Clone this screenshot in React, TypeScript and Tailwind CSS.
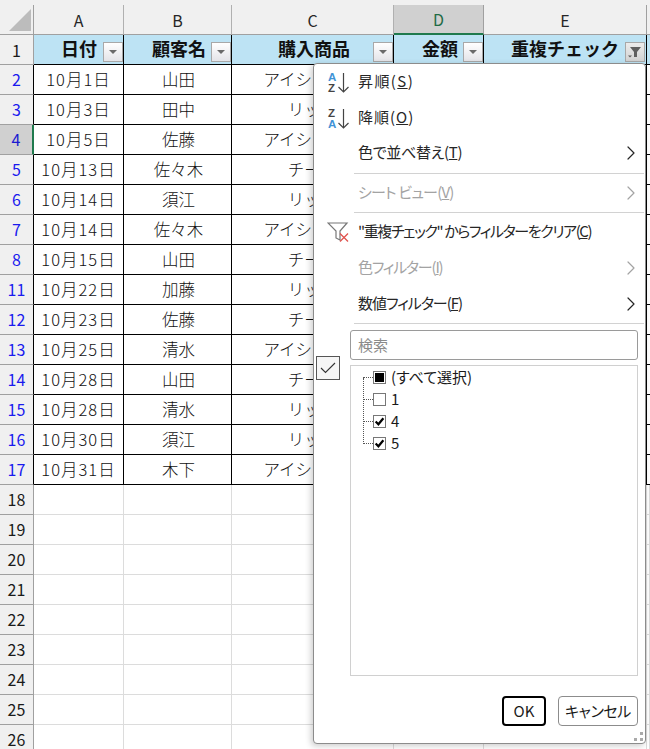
import { ChevronRight } from 'lucide-react';

const font = "font-['Noto_Sans_CJK_JP',sans-serif]";

interface Sale {
  row: number;
  date: string;
  customer: string;
  product: string;
}

const sales: Sale[] = [
  { row: 2, date: '10月1日', customer: '山田', product: 'アイシャドウ' },
  { row: 3, date: '10月3日', customer: '田中', product: 'リップ' },
  { row: 4, date: '10月5日', customer: '佐藤', product: 'アイシャドウ' },
  { row: 5, date: '10月13日', customer: '佐々木', product: 'チーク' },
  { row: 6, date: '10月14日', customer: '須江', product: 'リップ' },
  { row: 7, date: '10月14日', customer: '佐々木', product: 'アイシャドウ' },
  { row: 8, date: '10月15日', customer: '山田', product: 'チーク' },
  { row: 11, date: '10月22日', customer: '加藤', product: 'リップ' },
  { row: 12, date: '10月23日', customer: '佐藤', product: 'チーク' },
  { row: 13, date: '10月25日', customer: '清水', product: 'アイシャドウ' },
  { row: 14, date: '10月28日', customer: '山田', product: 'チーク' },
  { row: 15, date: '10月28日', customer: '清水', product: 'リップ' },
  { row: 16, date: '10月30日', customer: '須江', product: 'リップ' },
  { row: 17, date: '10月31日', customer: '木下', product: 'アイシャドウ' },
];

const emptyRows = [18, 19, 20, 21, 22, 23, 24, 25, 26];

const rowClass = 'grid grid-cols-[34px_90px_108px_162px_90px_163px_3px] h-[30px]';
const cell = 'flex items-center justify-center border-r border-b border-black pb-[1px] text-[16.5px] font-light text-[#111]';

const FilterButton = ({ active }: { active?: boolean }) => (
  <span className={`mb-[2px] flex h-[20px] w-[20px] shrink-0 items-center justify-center self-end border border-[#a8a8a8] bg-gradient-to-b ${active ? 'mr-[1px] from-[#ececec] to-[#d2d2d2]' : 'from-white to-[#e4e4e8]'}`}>
    {active ? (
      <svg width="16" height="14" viewBox="0 0 16 14">
        <path d="M3 2h11l-4 5v5H7V7z" fill="#5f5f5f" />
        <path d="M1 10.500h4l-2 2z" fill="#5f5f5f" />
      </svg>
    ) : (
      <svg width="10" height="6" viewBox="0 0 10 6">
        <path d="M1 1h8L5 5z" fill="#6a6a6a" />
      </svg>
    )}
  </span>
);

const HeaderCell = ({ label, pad }: { label: string; pad: string }) => (
  <div className="flex items-center justify-end border-r border-b border-black">
    <span className={`-mt-[3px] text-[18px] font-bold leading-none text-[#111] ${pad}`}>{label}</span>
    <FilterButton active={label === '重複チェック'} />
  </div>
);

const SortIcon = ({ top, bottom }: { top: string; bottom: string }) => (
  <svg width="24" height="24" viewBox="0 0 24 24" className="shrink-0">
    <text x="1" y="11" fontSize="11.5" fontWeight="700" fontFamily="Liberation Sans" fill={top === 'A' ? '#3f93d6' : '#444'}>{top}</text>
    <text x="1" y="22" fontSize="11.5" fontWeight="700" fontFamily="Liberation Sans" fill={bottom === 'A' ? '#3f93d6' : '#444'}>{bottom}</text>
    <path d="M16.500 3v19M11.500 17l5 5 5-5" fill="none" stroke="#444" strokeWidth="1.2" />
  </svg>
);

const MenuItem = ({
  label,
  height,
  spacing,
  icon,
  disabled,
  arrow,
}: {
  label: React.ReactNode;
  height: string;
  spacing: string;
  icon?: React.ReactNode;
  disabled?: boolean;
  arrow?: boolean;
}) => (
  <div className={`flex items-center ${height}`}>
    <span className="flex w-[44px] shrink-0 justify-start pl-[13px]">{icon}</span>
    <span className={`flex-1 whitespace-nowrap pb-[1px] text-[15px] ${spacing} ${disabled ? 'text-[#a3a3a3]' : 'text-[#262626]'}`}>{label}</span>
    {arrow && <ChevronRight size={24} strokeWidth={1.2} className={`mr-[2px] ${disabled ? 'text-[#a3a3a3]' : 'text-[#262626]'}`} />}
  </div>
);

const Separator = () => <div className="ml-[40px] mr-[1px] h-px bg-[#d2d2d2]" />;

const TreeRow = ({ label, mark }: { label: string; mark: 'mixed' | 'none' | 'check' }) => (
  <div className="ml-[12px] flex h-[22px] items-center">
    <span className="w-[10px] border-t border-dotted border-[#555]" />
    <span className="flex h-[13px] w-[13px] items-center justify-center border border-[#777] bg-white">
      {mark === 'mixed' && <span className="h-[9px] w-[9px] bg-black" />}
      {mark === 'check' && (
        <svg width="11" height="11" viewBox="0 0 10 10">
          <path d="M1.500 5l2.500 2.500L8.500 2" fill="none" stroke="#000" strokeWidth="2" />
        </svg>
      )}
    </span>
    <span className="ml-[5px] text-[15px] text-[#1a1a1a]">{label}</span>
  </div>
);

const FilterMenu = () => (
  <div className="absolute left-[313px] top-[63px] flex h-[681px] w-[333px] flex-col rounded-[4px] border border-[#8c8c8c] bg-white shadow-[-2px_2px_6px_rgba(0,0,0,0.2)] [font-feature-settings:'palt']">
    <MenuItem height="h-[36px]" spacing="tracking-[1.4px]" icon={<SortIcon top="A" bottom="Z" />} label={<>昇順(<u>S</u>)</>} />
    <MenuItem height="h-[35px]" spacing="tracking-[1px]" icon={<SortIcon top="Z" bottom="A" />} label={<>降順(<u>O</u>)</>} />
    <MenuItem height="h-[36px]" spacing="tracking-[-0.3px]" arrow label={<>色で並べ替え(<u>T</u>)</>} />
    <div className="mt-[2px]" />
    <Separator />
    <MenuItem height="h-[37px]" spacing="tracking-[-0.8px]" disabled arrow label={<>シート ビュー(<u>V</u>)</>} />
    <div className="mt-[1px]" />
    <Separator />
    <MenuItem
      height="h-[37px]"
      spacing="tracking-[-1.4px]"
      icon={
        <svg width="22" height="20" viewBox="0 0 22 20">
          <path d="M1 1h19l-7 8v9l-4-2V9z" fill="none" stroke="#777" strokeWidth="1.2" />
          <path d="M13 11.500l8 8M21 11.500l-8 8" stroke="#e0524d" strokeWidth="1.3" />
        </svg>
      }
      label={<>"重複チェック" からフィルターをクリア(<u>C</u>)</>}
    />
    <MenuItem height="h-[36px]" spacing="tracking-[-1.2px]" disabled arrow label={<>色フィルター(<u>I</u>)</>} />
    <MenuItem height="h-[36px]" spacing="tracking-[-1px]" arrow label={<>数値フィルター(<u>F</u>)</>} />
    <div className="mt-[1px]" />
    <Separator />
    <div className="flex flex-1 pt-[6px]">
      <div className="w-[36px] shrink-0 pl-[2px] pt-[26px]">
        <span className="flex h-[24px] w-[24px] items-center justify-center border border-[#555] bg-[#f5f5f5]">
          <svg width="16" height="12" viewBox="0 0 16 12">
            <path d="M1 6l4.500 4.500L15 1" fill="none" stroke="#333" strokeWidth="1.1" />
          </svg>
        </span>
      </div>
      <div className="flex min-w-0 flex-1 flex-col pr-[7px]">
        <div className="flex h-[30px] items-center rounded-[3px] border border-[#9a9a9a] px-[7px] text-[15px] text-[#8a8a8a]">検索</div>
        <div className="relative mt-[5px] h-[311px] border border-[#d0d0d0]">
          <span className="absolute left-[12px] top-[12px] h-[66px] border-l border-dotted border-[#555]" />
          <TreeRow label="(すべて選択)" mark="mixed" />
          <TreeRow label="1" mark="none" />
          <TreeRow label="4" mark="check" />
          <TreeRow label="5" mark="check" />
        </div>
        <div className="mt-[20px] flex justify-end gap-[12px]">
          <button className="h-[30px] w-[44px] rounded-[4px] border-2 border-black text-[15px] text-[#1a1a1a]">OK</button>
          <button className="h-[30px] w-[80px] rounded-[4px] border border-[#8c8c8c] text-[15px] tracking-[-0.4px] text-[#1a1a1a]">キャンセル</button>
        </div>
      </div>
    </div>
    <div className="absolute bottom-[2px] right-[2px] grid grid-cols-2 gap-[3px]">
      <span className="h-[3px] w-[3px]" />
      <span className="h-[3px] w-[3px] bg-[#aaa]" />
      <span className="h-[3px] w-[3px] bg-[#aaa]" />
      <span className="h-[3px] w-[3px] bg-[#aaa]" />
    </div>
  </div>
);

export default function App() {
  return (
    <div className={`relative h-[749px] w-[650px] overflow-hidden bg-white ${font}`}>
      <div className="grid h-[35px] grid-cols-[34px_90px_108px_162px_90px_163px_3px] bg-[#f0f0f0] pt-[5px] text-[16px] text-[#262626]">
        <div className="flex items-end justify-end border-r border-b border-[#a0a0a0] pb-[3px] pr-[2px]">
          <svg width="22" height="22" viewBox="0 0 22 22">
            <path d="M22 0v22H0z" fill="#bcbcbc" />
          </svg>
        </div>
        {['A', 'B', 'C'].map((c) => (
          <div key={c} className="flex items-center justify-center border-r border-b border-[#b0b0b0] border-b-[#a0a0a0]">{c}</div>
        ))}
        <div className="flex items-center justify-center border-b-2 border-r border-[#1f7a4d] border-r-[#a0a0a0] bg-[#d0d0d0] text-[#1f6b45]">D</div>
        <div className="flex items-center justify-center border-r border-b border-[#a0a0a0]">E</div>
        <div className="border-b border-[#a0a0a0]" />
      </div>

      <div className={`${rowClass} bg-[#bde3f4]`}>
        <div className="flex items-center justify-center border-r border-b border-[#a0a0a0] bg-[#f0f0f0] text-[16px] text-[#1a1a1a]">1</div>
        <HeaderCell label="日付" pad="mr-[6px]" />
        <HeaderCell label="顧客名" pad="mr-[5px]" />
        <HeaderCell label="購入商品" pad="mr-[23px]" />
        <HeaderCell label="金額" pad="mr-[5px]" />
        <HeaderCell label="重複チェック" pad="mr-[6px]" />
        <div className="border-b border-black" />
      </div>

      {sales.map((s) => (
        <div key={s.row} className={rowClass}>
          <div className={`flex items-center justify-center border-b border-b-[#a0a0a0] pb-[1px] text-[16px] ${s.row === 4 ? 'border-r-2 border-r-[#1f7a4d] bg-[#d0d0d0] text-[#1a1ad0]' : 'border-r border-r-black bg-[#f0f0f0] text-[#1a1aee]'}`}>{s.row}</div>
          <div className={`${cell} tracking-[1px]`}>{s.date}</div>
          <div className={`${cell} pl-[2px]`}>{s.customer}</div>
          <div className={cell}>{s.product}</div>
          <div className={cell} />
          <div className={cell} />
          <div className="border-b border-black" />
        </div>
      ))}

      {emptyRows.map((n) => (
        <div key={n} className={rowClass}>
          <div className="flex items-center justify-center border-r border-b border-[#a0a0a0] bg-[#f0f0f0] pb-[1px] text-[16px] text-[#1a1a1a]">{n}</div>
          {[0, 1, 2, 3, 4, 5].map((i) => (
            <div key={i} className="border-r border-b border-[#dcdcdc]" />
          ))}
        </div>
      ))}

      <FilterMenu />
    </div>
  );
}
